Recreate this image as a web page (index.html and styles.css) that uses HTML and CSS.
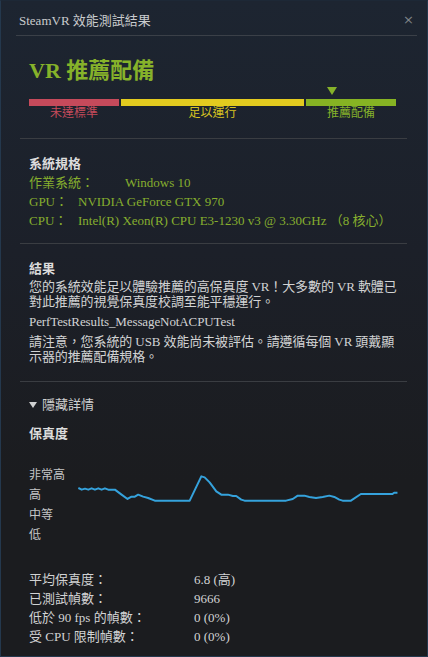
FILE: index.html
```html
<!DOCTYPE html>
<html>
<head>
<meta charset="utf-8">
<link rel="stylesheet" href="styles.css">
</head>
<body>
<div class="window">
  <div class="titlebar">
    <span class="title">SteamVR 效能測試結果</span>
    <span class="close">×</span>
  </div>
  <div class="content">
    <div class="section verdict">
      <div class="verdict-title">VR 推薦配備</div>
      <div class="scale">
        <div class="marker-row"><span class="marker"></span></div>
        <div class="bar bar-red"></div>
        <div class="bar bar-yellow"></div>
        <div class="bar bar-green"></div>
        <div class="label label-red">未達標準</div>
        <div class="label label-yellow">足以運行</div>
        <div class="label label-green">推薦配備</div>
      </div>
    </div>

    <div class="section specs">
      <div class="heading">系統規格</div>
      <div class="spec"><span class="spec-key wide">作業系統：</span><span>Windows 10</span></div>
      <div class="spec"><span class="spec-key">GPU：</span><span>NVIDIA GeForce GTX 970</span></div>
      <div class="spec"><span class="spec-key">CPU：</span><span>Intel(R) Xeon(R) CPU E3-1230 v3 @ 3.30GHz （8 核心）</span></div>
    </div>

    <div class="section results">
      <div class="heading">結果</div>
      <p>您的系統效能足以體驗推薦的高保真度 VR！大多數的 VR 軟體已對此推薦的視覺保真度校調至能平穩運行。</p>
      <p>PerfTestResults_MessageNotACPUTest</p>
      <p>請注意，您系統的 USB 效能尚未被評估。請遵循每個 VR 頭戴顯示器的推薦配備規格。</p>
    </div>

    <div class="section details">
      <div class="toggle"><span class="toggle-arrow"></span>隱藏詳情</div>
      <div class="heading fidelity-title">保真度</div>
      <div class="chart">
        <div class="axis">
          <div>非常高</div>
          <div>高</div>
          <div>中等</div>
          <div>低</div>
        </div>
        <svg class="graph" width="321" height="40" viewBox="234 240 963 120">
          <polyline fill="none" stroke="#35a2dc" stroke-width="6" stroke-linejoin="round"
            points="235,300 245,305 255,302 265,305 275,301 285,305 295,301 305,305 315,301 325,305 345,305 365,320 383,333 395,326 405,326 415,320 430,326 445,330 465,338 570,338 605,265 615,268 630,283 650,310 665,320 685,320 700,324 710,324 725,335 735,338 860,338 880,333 895,323 915,323 930,327 950,330 970,327 990,323 1005,327 1020,335 1030,338 1055,338 1085,318 1180,318 1185,314 1195,314"/>
        </svg>
      </div>
      <div class="stats">
        <div class="stat"><span class="stat-key">平均保真度：</span><span>6.8 (高)</span></div>
        <div class="stat"><span class="stat-key">已測試幀數：</span><span>9666</span></div>
        <div class="stat"><span class="stat-key">低於 90 fps 的幀數：</span><span>0 (0%)</span></div>
        <div class="stat"><span class="stat-key">受 CPU 限制幀數：</span><span>0 (0%)</span></div>
      </div>
    </div>
  </div>
</div>
</body>
</html>
```

FILE: styles.css
```css
html, body {
  margin: 0;
  padding: 0;
  background: #1b1c1f;
}

body {
  font-family: "Liberation Serif", "Noto Sans CJK TC", serif;
  font-size: 13px;
  color: #d4d5d6;
}

.window {
  box-sizing: border-box;
  height: 657px;
  border: 1px solid #24384d;
  border-top-color: #1d2836;
  background: linear-gradient(to bottom, #1d2531 0px, #1c2029 250px, #1b1c1f 480px);
}

.titlebar {
  display: flex;
  align-items: center;
  justify-content: space-between;
  height: 34px;
  margin: 0 10px 0 15px;
  padding: 0 3px 0 3px;
  border-bottom: 1px solid #3b4048;
}

.title {
  color: #c9cbcd;
  font-size: 13px;
  padding-top: 3px;
}

.close {
  color: #7f8387;
  font-family: "DejaVu Sans", sans-serif;
  font-size: 13px;
  padding-top: 3px;
}

.content {
  margin: 0 20px 0 19px;
}

.section {
  padding: 0 9px;
  border-bottom: 1px solid #3a3d42;
}

.section.details {
  border-bottom: none;
}

/* verdict */
.verdict {
  padding-top: 22px;
  height: 80px;
}

.verdict-title {
  color: #86b22a;
  font-size: 22px;
  font-weight: bold;
  line-height: 26px;
}

.scale {
  display: grid;
  grid-template-columns: 90px 183px 90px;
  column-gap: 2px;
  margin-top: 3px;
}

.marker-row {
  grid-column: 3;
  height: 12px;
  padding-left: 21px;
}

.marker {
  display: block;
  width: 0;
  height: 0;
  border-left: 5px solid transparent;
  border-right: 5px solid transparent;
  border-top: 8px solid #86b22a;
}

.marker-row { grid-row: 1; }
.bar { height: 7px; grid-row: 2; }
.bar-red { background: #c64a5b; }
.bar-yellow { background: #e3cb1f; }
.bar-green { background: #86b323; }

.label {
  grid-row: 3;
  text-align: center;
  font-size: 12px;
  line-height: 15px;
}
.label-red { color: #c54b5b; }
.label-yellow { color: #d9c521; }
.label-green { color: #86b22a; }

/* specs */
.heading {
  font-weight: bold;
  color: #dcdcdc;
  font-size: 13px;
  line-height: 18px;
}

.specs {
  padding-top: 16px;
  padding-bottom: 13px;
}

.spec {
  color: #86ae2e;
  line-height: 19px;
  display: flex;
}

.spec-key {
  width: 49px;
}

.spec-key.wide {
  width: 96px;
}

/* results */
.results {
  padding-top: 16px;
  padding-bottom: 12px;
  padding-right: 0;
}

.results p {
  margin: 0 0 5px 0;
  max-width: 372px;
  line-height: 15px;
  letter-spacing: -0.1px;
  color: #d2d3d4;
}

.results .heading {
  margin-bottom: 1px;
}

/* details */
.details {
  padding-top: 14px;
}

.toggle {
  display: flex;
  align-items: center;
  line-height: 18px;
  color: #cfd0d1;
}

.toggle-arrow {
  width: 0;
  height: 0;
  border-left: 4px solid transparent;
  border-right: 4px solid transparent;
  border-top: 6px solid #cfd0d1;
  margin-right: 5px;
}

.fidelity-title {
  margin-top: 11px;
}

.chart {
  display: flex;
  margin-top: 22px;
}

.axis {
  width: 49px;
  color: #c5c6c7;
  line-height: 20px;
  font-size: 12px;
}

.graph {
  margin-top: 3px;
}

.stats {
  margin-top: 25px;
}

.stat {
  display: flex;
  line-height: 19px;
  color: #d2d3d4;
}

.stat-key {
  width: 165px;
}
```
